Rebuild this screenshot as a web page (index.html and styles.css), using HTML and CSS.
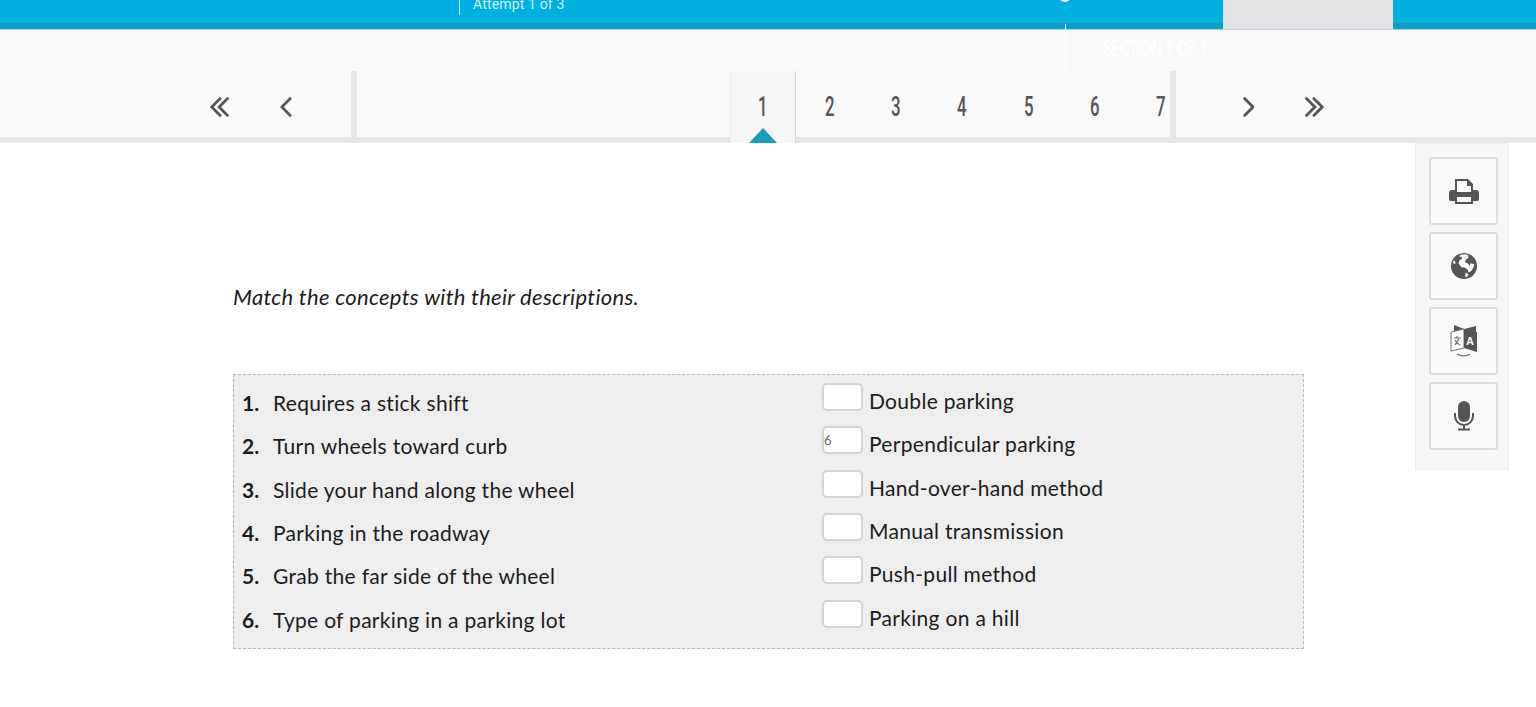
FILE: index.html
```html
<!DOCTYPE html>
<html lang="en">

<head>
    <meta charset="UTF-8">
    <meta name="viewport" content="width=device-width, initial-scale=1.0">
    <title>Match the concepts</title>
    <link rel="stylesheet" href="styles.css">
</head>

<body>

    <header class="topbar">
        <div class="attempt"><span class="attempt-text">Attempt 1 of 3</span></div>
        <span class="top-dot"></span>
        <div class="top-tab"></div>
    </header>

    <div class="section-row">
        <span class="section-label"><span class="squeeze">SECTION 1 OF 1</span></span>
    </div>

    <nav class="pager">
        <div class="pager-prev">
            <a class="arrow"><svg width="24" height="24" viewBox="0 0 24 24"><path class="chev" d="M13 2 3 12l10 10M21 2 11 12l10 10"/></svg></a>
            <a class="arrow"><svg width="14" height="24" viewBox="0 0 14 24"><path class="chev" d="M12 2 2 12l10 10"/></svg></a>
        </div>
        <div class="pager-nums">
            <a class="num active"><span class="squeeze">1</span></a>
            <a class="num"><span class="squeeze">2</span></a>
            <a class="num"><span class="squeeze">3</span></a>
            <a class="num"><span class="squeeze">4</span></a>
            <a class="num"><span class="squeeze">5</span></a>
            <a class="num"><span class="squeeze">6</span></a>
            <a class="num"><span class="squeeze">7</span></a>
        </div>
        <div class="pager-next">
            <a class="arrow"><svg width="14" height="24" viewBox="0 0 14 24"><path class="chev" d="m2 2 10 10L2 22"/></svg></a>
            <a class="arrow"><svg width="24" height="24" viewBox="0 0 24 24"><path class="chev" d="m3 2 10 10L3 22M11 2l10 10-10 10"/></svg></a>
        </div>
    </nav>

    <aside class="tools">
        <button class="tool">
            <svg width="30" height="27" viewBox="0 0 30 27"><path fill="#555" d="M6 1h13l5 5v6h3a3 3 0 0 1 3 3v6a2 2 0 0 1-2 2h-4v3H6v-3H2a2 2 0 0 1-2-2v-6a3 3 0 0 1 3-3h3z"/><path fill="#fafafa" d="M8 3h10v5h4v6H8zM8 19h14v5H8z"/></svg>
        </button>
        <button class="tool">
            <svg width="26" height="26" viewBox="0 0 28 28"><circle cx="14" cy="14" r="14" fill="#555"/><path fill="#fafafa" d="M10 2c3-1 6-1 8 0l1 3-3 2-1 3 3 1 2 3 1-3 4 1c0 3-2 6-4 8l-2 1-1-3-3-2-4-1-3-4 1-3 3-2-1-2-2 0zM2 9l2-1 1 3-2 1zM16 21l3 2-2 3-2-1z"/></svg>
        </button>
        <button class="tool">
            <svg width="28" height="33" viewBox="0 0 28 33"><path fill="#555" d="M4 0 14 4l12-3v6H4z"/><path fill="#fafafa" stroke="#777" d="M1 7 14 4v19L1 26z"/><path fill="#555" d="M14 5 27 7v20l-13-4z"/><path fill="none" stroke="#777" stroke-width="1.2" d="M4 13h7M7 11v2M9 13c-1 4-2 5-4 7M5 15c1 3 3 4 5 5"/><text class="tool-a" x="16" y="20">A</text><path fill="none" stroke="#777" stroke-width="1.2" d="M7 29c3 2 9 3 13 0"/></svg>
        </button>
        <button class="tool">
            <svg width="22" height="30" viewBox="0 0 22 30"><rect x="5" y="0" width="12" height="21" rx="6" fill="#555"/><path fill="none" stroke="#555" stroke-width="2" d="M2 12v3a9 9 0 0 0 18 0v-3M11 24v4M5 28.500h12"/></svg>
        </button>
    </aside>

    <main class="content">
        <p class="instructions">Match the concepts with their descriptions.</p>

        <div class="match-box">
            <div class="match-row">
                <div class="match-left"><b>1.</b>Requires a stick shift</div>
                <div class="match-right"><input class="answer" type="text"><span>Double parking</span></div>
            </div>
            <div class="match-row">
                <div class="match-left"><b>2.</b>Turn wheels toward curb</div>
                <div class="match-right"><input class="answer" type="text" value="6"><span>Perpendicular parking</span></div>
            </div>
            <div class="match-row">
                <div class="match-left"><b>3.</b>Slide your hand along the wheel</div>
                <div class="match-right"><input class="answer" type="text"><span>Hand-over-hand method</span></div>
            </div>
            <div class="match-row">
                <div class="match-left"><b>4.</b>Parking in the roadway</div>
                <div class="match-right"><input class="answer" type="text"><span>Manual transmission</span></div>
            </div>
            <div class="match-row">
                <div class="match-left"><b>5.</b>Grab the far side of the wheel</div>
                <div class="match-right"><input class="answer" type="text"><span>Push-pull method</span></div>
            </div>
            <div class="match-row">
                <div class="match-left"><b>6.</b>Type of parking in a parking lot</div>
                <div class="match-right"><input class="answer" type="text"><span>Parking on a hill</span></div>
            </div>
        </div>
    </main>

</body>

</html>
```

FILE: styles.css
```css
html,
body {
    margin: 0;
    height: 707px;
    overflow: hidden;
}

body {
    background-color: #fff;
    color: #1c1c1c;
    font-family: Lato, "Open Sans", sans-serif;
    position: relative;
}

.topbar {
    display: flex;
    height: 23px;
    background-color: #00b0de;
    border-bottom: 6px solid #119cc2;
    box-shadow: 0 1px 0 #8fdcf0;
    position: relative;
}

.attempt {
    margin-left: 459px;
    height: 15px;
    padding-left: 13px;
    border-left: 1px solid #cfeef7;
    width: 300px;
}

.attempt-text {
    display: block;
    margin-top: -6px;
    color: #d6f1f9;
    font: 14px/20px Roboto, sans-serif;
    letter-spacing: 0.15px;
}

.top-dot {
    position: absolute;
    left: 1059px;
    top: -10px;
    width: 12px;
    height: 12px;
    border-radius: 50%;
    background-color: #fff;
}

.top-tab {
    position: absolute;
    left: 1223px;
    top: 0;
    width: 170px;
    height: 29px;
    background-color: #e3e4e5;
    border-bottom: 1px solid #ccd;
}

.section-row {
    height: 42px;
    background-color: #f9f9f9;
    padding-top: 1px;
}

.section-label {
    display: block;
    margin-left: 1065px;
    margin-top: -6px;
    height: 48px;
    padding-left: 37px;
    border-left: 1px solid #fff;
    color: #fff;
    font: 22px/50px Roboto, sans-serif;
    position: relative;
}

.section-label .squeeze {
    display: inline-block;
    transform: scaleX(0.66);
    transform-origin: left center;
    white-space: nowrap;
}

.pager {
    display: flex;
    height: 66px;
    margin-top: -1px;
    background-color: #f9f9f9;
    border-bottom: 6px solid #e6e6e6;
}

.pager-prev {
    display: flex;
    width: 164px;
    margin-left: 187px;
    margin-bottom: -6px;
    border-right: 6px solid #e6e6e6;
}

.pager-next {
    display: flex;
    margin-bottom: -6px;
    padding-left: 39px;
    border-left: 6px solid #e6e6e6;
    position: relative;
}

.arrow {
    display: flex;
    align-items: center;
    justify-content: center;
    width: 66px;
    height: 72px;
}

.arrow svg {
    width: auto;
    height: 22px;
}

.chev {
    fill: none;
    stroke: #555;
    stroke-width: 3;
}

.pager-nums {
    display: flex;
    width: 440px;
    margin-left: 373px;
}

.num {
    flex: none;
    display: flex;
    align-items: center;
    justify-content: center;
    width: 66.300px;
    height: 72px;
    color: #555;
    font: 500 27px/72px Roboto, sans-serif;
    position: relative;
}

.num .squeeze {
    display: block;
    transform: scaleX(0.62);
}

.num.active {
    box-sizing: border-box;
    height: 72px;
    background-color: #f6f6f6;
    border-left: 1px solid #efefef;
    border-right: 1px solid #c8dde8;
}

.num.active::after {
    content: "";
    position: absolute;
    left: 18px;
    bottom: 0;
    border-left: 14px solid transparent;
    border-right: 14px solid transparent;
    border-bottom: 15px solid #1a9bc0;
}

/* side panel sits on top of the page */
.tools {
    position: absolute;
    left: 1415px;
    top: 143px;
    box-sizing: border-box;
    width: 94px;
    height: 327px;
    padding: 13px 10px 0 13px;
    display: flex;
    flex-direction: column;
    gap: 7px;
    background-color: #f6f6f6;
    border: 1px solid #eee;
}

.tool {
    flex: none;
    display: flex;
    align-items: center;
    justify-content: center;
    box-sizing: border-box;
    width: 69px;
    height: 68px;
    padding: 0;
    background-color: #fafafa;
    border: 2px solid #dcdcdc;
    border-radius: 3px;
}

.tool-a {
    fill: #fafafa;
    font: bold 11px "Liberation Sans", sans-serif;
}

.content {
    margin-left: 233px;
    width: 1071px;
}

.instructions {
    margin: 0;
    padding-top: 140px;
    height: 91px;
    font-size: 22px;
    line-height: 28px;
    font-style: italic;
    letter-spacing: 0.3px;
}

.match-box {
    box-sizing: border-box;
    height: 275px;
    padding: 7px 8px 0;
    background-color: #eee;
    border: 1px dashed #bbb;
}

.match-row {
    display: flex;
    height: 43.350px;
    font-size: 21px;
    letter-spacing: 0.3px;
}

.match-left {
    width: 580px;
    line-height: 26px;
    padding-top: 8px;
    box-sizing: border-box;
}

.match-left b {
    display: inline-block;
    width: 31px;
    letter-spacing: 0;
}

.match-right {
    display: flex;
    align-items: flex-start;
    line-height: 26px;
}

.match-right span {
    margin-left: 6px;
    padding-top: 6px;
}

.answer {
    box-sizing: border-box;
    width: 41px;
    height: 28px;
    margin-top: 1px;
    padding: 0;
    background-color: #fff;
    border: 2px solid #d4d4d4;
    border-radius: 5px;
    color: #666;
    font: 13px Lato, sans-serif;
    outline: none;
}
```
